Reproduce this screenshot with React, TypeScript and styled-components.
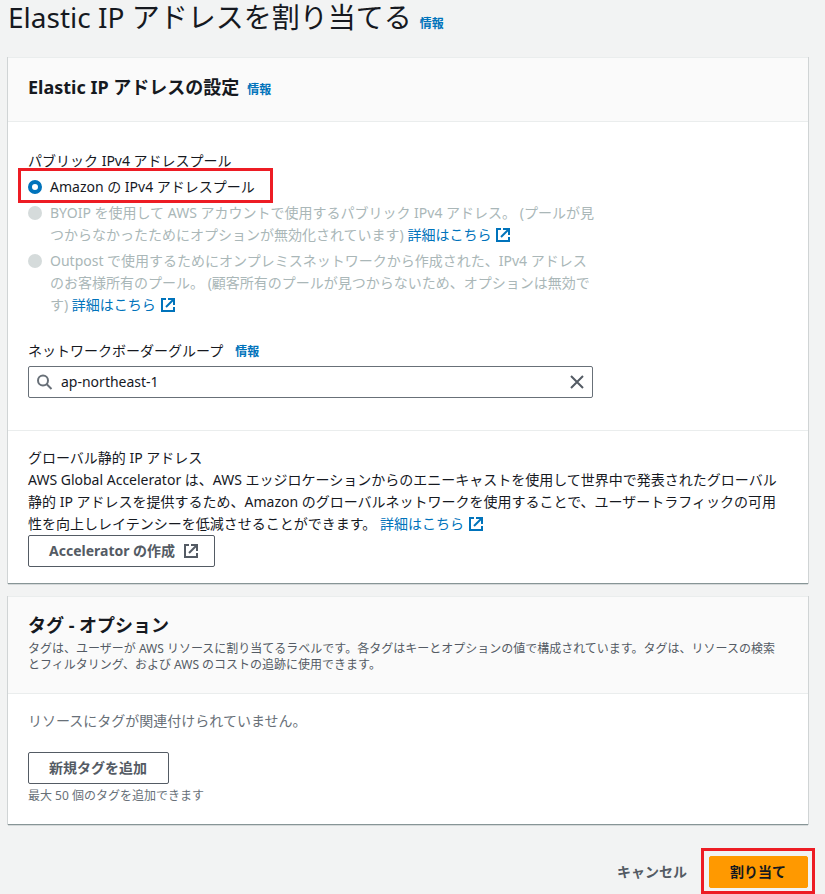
import React, { useState } from "react";
import styled, { createGlobalStyle, css } from "styled-components";

const color = {
  page: "#f2f3f3",
  header: "#fafafa",
  text: "#16191f",
  secondary: "#545b64",
  muted: "#687078",
  disabled: "#aab7b8",
  link: "#0073bb",
  line: "#eaeded",
  marker: "#ed1c24",
};

const GlobalStyle = createGlobalStyle`
  *, *::before, *::after { box-sizing: border-box; }
  body {
    margin: 0;
    background: ${color.page};
    color: ${color.text};
    font-family: "Noto Sans", "Noto Sans CJK JP", sans-serif;
    font-size: 14px;
    line-height: 22px;
  }
  button, input { font: inherit; }
`;

const Page = styled.main`
  padding: 0 17px 0 8px;
`;

const PageTitle = styled.h1`
  margin: 0 0 23px;
  font-size: 28px;
  font-weight: 400;
  line-height: 34px;
`;

const Card = styled.section`
  margin-bottom: 12px;
  background: #fff;
  border-top: 1px solid ${color.line};
  border-bottom: 1px solid #879596;
  box-shadow: -1px 0 0 0 #d0d4d5, 1px 0 0 0 #d0d4d5, 0 1px 0 0 #d5d9da;
`;

const CardHeader = styled.header<{ $tall?: boolean }>`
  padding: ${(p) => (p.$tall ? "16px 20px 20px" : "17px 20px 22px")};
  background: ${color.header};
  border-bottom: 1px solid ${color.line};
`;

const CardTitle = styled.h2`
  margin: 0;
  font-size: 18px;
  font-weight: 700;
  line-height: 24px;
`;

const CardDescription = styled.p`
  max-width: 752px;
  margin: 4px 0 0;
  color: ${color.secondary};
  font-size: 12px;
  line-height: 16px;
`;

const CardBody = styled.div<{ $top: number; $bottom: number }>`
  padding: ${(p) => p.$top}px 20px ${(p) => p.$bottom}px;
`;

const Divider = styled.hr`
  margin: 0;
  border: 0;
  border-top: 1px solid ${color.line};
`;

const InfoLink = styled.a<{ $gap?: number }>`
  margin-left: ${(p) => p.$gap ?? 8}px;
  color: ${color.link};
  font-size: 12px;
  font-weight: 700;
  line-height: 16px;
  text-decoration: none;
`;

const TextLink = styled.a`
  color: ${color.link};
  text-decoration: none;
  white-space: nowrap;

  svg { margin-left: 4px; }
`;

const Fieldset = styled.fieldset`
  display: flex;
  flex-direction: column;
  gap: 4px;
  max-width: 568px;
  margin: 0 0 24px;
  padding: 0;
  border: 0;

  legend { margin-bottom: 4px; padding: 0; }
`;

const Option = styled.div<{ $disabled?: boolean }>`
  display: flex;
  align-items: flex-start;
  gap: 8px;
  color: ${(p) => (p.$disabled ? color.disabled : color.text)};
`;

const Marked = styled.div<{ $snug?: boolean }>`
  position: relative;
  align-self: flex-start;

  &::after {
    content: "";
    position: absolute;
    inset: ${(p) => (p.$snug ? "-8px -7px -6px -8px" : "-8px -18px -5px -10px")};
    border: 3px solid ${color.marker};
    pointer-events: none;
  }
`;

const Radio = styled.input`
  flex: none;
  appearance: none;
  width: 14px;
  height: 14px;
  margin: 4px 0 0;
  border-radius: 50%;
  background: #d5dbdb;

  &:checked {
    border: 4px solid ${color.link};
    background: #fff;
  }
`;

const FieldLabel = styled.div`
  margin-bottom: 4px;
`;

const SearchBox = styled.div`
  display: flex;
  align-items: center;
  gap: 8px;
  max-width: 565px;
  height: 32px;
  padding: 0 7px 0 8px;
  border: 1px solid ${color.muted};
  border-radius: 2px;
  background: #fff;

  input {
    flex: 1;
    min-width: 0;
    padding: 0;
    border: 0;
    outline: 0;
    background: transparent;
    color: ${color.text};
  }
`;

const ClearButton = styled.button`
  display: flex;
  padding: 0;
  border: 0;
  background: none;
  color: ${color.secondary};
  cursor: pointer;
`;

const Paragraph = styled.p<{ $muted?: boolean }>`
  margin: 0;
  color: ${(p) => (p.$muted ? color.muted : "inherit")};
`;

const buttonBase = css`
  display: inline-flex;
  align-items: center;
  gap: 8px;
  height: 32px;
  padding: 0 21px 0 20px;
  border: 1px solid ${color.secondary};
  border-radius: 2px;
  background: #fff;
  color: ${color.secondary};
  font-weight: 700;
  text-decoration: none;
  white-space: nowrap;
  cursor: pointer;
`;

const Button = styled.button<{ $kind?: "primary" | "link" }>`
  ${buttonBase}
  ${(p) =>
    p.$kind === "primary" &&
    css`
      border-color: #ff9900;
      background: #ff9900;
      color: ${color.text};
    `}
  ${(p) =>
    p.$kind === "link" &&
    css`
      border-color: transparent;
      background: transparent;
    `}
`;

const ButtonLink = styled.a`
  ${buttonBase}
  display: flex;
  width: fit-content;
  padding-right: 15px;
`;

const AddTagButton = styled(Button)`
  display: flex;
  margin-top: 20px;
`;

const Hint = styled.p`
  margin: 4px 0 0;
  color: ${color.muted};
  font-size: 12px;
  line-height: 16px;
`;

const Actions = styled.footer`
  display: flex;
  justify-content: flex-end;
  margin-top: 31px;
  padding-bottom: 6px;
`;

const Icon = styled.svg`
  flex: none;
  width: 16px;
  height: 16px;
  fill: none;
  stroke: currentColor;
  stroke-width: 2;
  vertical-align: -3px;
`;

const ExternalIcon = () => (
  <Icon viewBox="0 0 16 16" aria-hidden="true">
    <path d="M6 2H2v12h12v-4" />
    <path d="M8 2h6v6" />
    <path d="M6 10l8-8" />
  </Icon>
);

const SearchIcon = () => (
  <Icon viewBox="0 0 16 16" aria-hidden="true" color={color.muted}>
    <circle cx="6" cy="6.5" r="5" />
    <path d="M9.5 10l5 5" />
  </Icon>
);

const CloseIcon = () => (
  <Icon viewBox="0 0 16 16" aria-hidden="true">
    <path d="M2 2l12 12M14 2L2 14" />
  </Icon>
);

const LearnMore = () => (
  <TextLink href="#more">
    詳細はこちら
    <ExternalIcon />
  </TextLink>
);

export default function App() {
  const [group, setGroup] = useState("ap-northeast-1");

  return (
    <>
      <GlobalStyle />
      <Page>
        <PageTitle>
          Elastic IP アドレスを割り当てる<InfoLink href="#info">情報</InfoLink>
        </PageTitle>

        <Card>
          <CardHeader>
            <CardTitle>
              Elastic IP アドレスの設定<InfoLink href="#info">情報</InfoLink>
            </CardTitle>
          </CardHeader>
          <CardBody $top={28} $bottom={32}>
            <Fieldset>
              <legend>パブリック IPv4 アドレスプール</legend>
              <Marked>
                <Option>
                  <Radio type="radio" name="pool" id="pool-amazon" defaultChecked />
                  <label htmlFor="pool-amazon">Amazon の IPv4 アドレスプール</label>
                </Option>
              </Marked>
              <Option $disabled>
                <Radio type="radio" name="pool" id="pool-byoip" disabled />
                <label htmlFor="pool-byoip">
                  BYOIP を使用して AWS アカウントで使用するパブリック IPv4 アドレス。
                  (プールが見つからなかったためにオプションが無効化されています) <LearnMore />
                </label>
              </Option>
              <Option $disabled>
                <Radio type="radio" name="pool" id="pool-outpost" disabled />
                <label htmlFor="pool-outpost">
                  Outpost で使用するためにオンプレミスネットワークから作成された、IPv4
                  アドレスのお客様所有のプール。 (顧客所有のプールが見つからないため、オプションは無効です){" "}
                  <LearnMore />
                </label>
              </Option>
            </Fieldset>
            <FieldLabel>
              <label htmlFor="border-group">ネットワークボーダーグループ</label>
              <InfoLink href="#info" $gap={12}>情報</InfoLink>
            </FieldLabel>
            <SearchBox>
              <SearchIcon />
              <input
                id="border-group"
                type="text"
                value={group}
                onChange={(e) => setGroup(e.target.value)}
              />
              <ClearButton type="button" aria-label="クリア" onClick={() => setGroup("")}>
                <CloseIcon />
              </ClearButton>
            </SearchBox>
          </CardBody>
          <Divider />
          <CardBody $top={16} $bottom={16}>
            <Paragraph>グローバル静的 IP アドレス</Paragraph>
            <Paragraph>
              AWS Global Accelerator は、AWS
              エッジロケーションからのエニーキャストを使用して世界中で発表されたグローバル静的 IP
              アドレスを提供するため、Amazon
              のグローバルネットワークを使用することで、ユーザートラフィックの可用性を向上しレイテンシーを低減させることができます。{" "}
              <LearnMore />
            </Paragraph>
            <ButtonLink href="#accelerator">
              Accelerator の作成
              <ExternalIcon />
            </ButtonLink>
          </CardBody>
        </Card>

        <Card>
          <CardHeader $tall>
            <CardTitle>タグ - オプション</CardTitle>
            <CardDescription>
              タグは、ユーザーが AWS
              リソースに割り当てるラベルです。各タグはキーとオプションの値で構成されています。タグは、リソースの検索とフィルタリング、および
              AWS のコストの追跡に使用できます。
            </CardDescription>
          </CardHeader>
          <CardBody $top={16} $bottom={20}>
            <Paragraph $muted>リソースにタグが関連付けられていません。</Paragraph>
            <AddTagButton type="button">新規タグを追加</AddTagButton>
            <Hint>最大 50 個のタグを追加できます</Hint>
          </CardBody>
        </Card>

        <Actions>
          <Button type="button" $kind="link">キャンセル</Button>
          <Marked $snug>
            <Button type="button" $kind="primary">割り当て</Button>
          </Marked>
        </Actions>
      </Page>
    </>
  );
}
